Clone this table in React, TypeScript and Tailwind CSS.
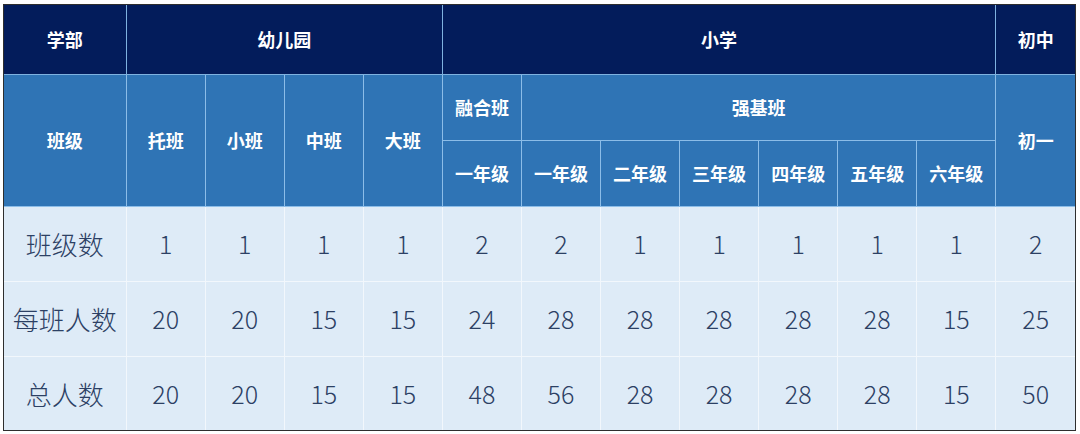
import React from "react";

const grades = ["一年级", "二年级", "三年级", "四年级", "五年级", "六年级"];

const rows = [
  { label: "班级数", values: [1, 1, 1, 1, 2, 2, 1, 1, 1, 1, 1, 2] },
  { label: "每班人数", values: [20, 20, 15, 15, 24, 28, 28, 28, 28, 28, 15, 25] },
  { label: "总人数", values: [20, 20, 15, 15, 48, 56, 28, 28, 28, 28, 15, 50] },
];

const navy = "bg-[#031c5b] border border-[#7fb2e0] text-white font-bold text-[18px] text-center align-middle";
const blue = "bg-[#2f74b5] border border-[#8cbde8] text-white font-bold text-[18px] text-center align-middle";
const body = "bg-[#deebf7] border border-[#f2f7fc] text-[#2c4064] font-light text-center align-middle";

export default function App() {
  return (
    <div className="w-[1080px] h-[434px] bg-white pt-[4px] pl-[3px] font-['Noto_Sans_CJK_SC','Noto_Sans',sans-serif]">
      <div className="w-[1073px] border border-[#2e2e2e]">
        <table className="w-full table-fixed border-collapse border-hidden">
          <colgroup>
            <col className="w-[122px]" />
            {Array.from({ length: 12 }).map((_, i) => (
              <col key={i} className="w-[79px]" />
            ))}
          </colgroup>
          <thead>
            <tr className="h-[69px]">
              <th className={navy}>学部</th>
              <th className={navy} colSpan={4}>幼儿园</th>
              <th className={navy} colSpan={7}>小学</th>
              <th className={navy}>初中</th>
            </tr>
            <tr className="h-[66px]">
              <th className={blue} rowSpan={2}>班级</th>
              <th className={blue} rowSpan={2}>托班</th>
              <th className={blue} rowSpan={2}>小班</th>
              <th className={blue} rowSpan={2}>中班</th>
              <th className={blue} rowSpan={2}>大班</th>
              <th className={blue}>融合班</th>
              <th className={blue} colSpan={6}>强基班</th>
              <th className={blue} rowSpan={2}>初一</th>
            </tr>
            <tr className="h-[66px]">
              <th className={blue}>一年级</th>
              {grades.map((g) => (
                <th key={g} className={blue}>
                  {g}
                </th>
              ))}
            </tr>
          </thead>
          <tbody>
            {rows.map((r, i) => (
              <tr key={r.label} className={i === 2 ? "h-[74px]" : "h-[75px]"}>
                <td className={`${body} text-[26px]`}>{r.label}</td>
                {r.values.map((v, j) => (
                  <td key={j} className={`${body} text-[25px]`}>
                    {v}
                  </td>
                ))}
              </tr>
            ))}
          </tbody>
        </table>
      </div>
    </div>
  );
}
